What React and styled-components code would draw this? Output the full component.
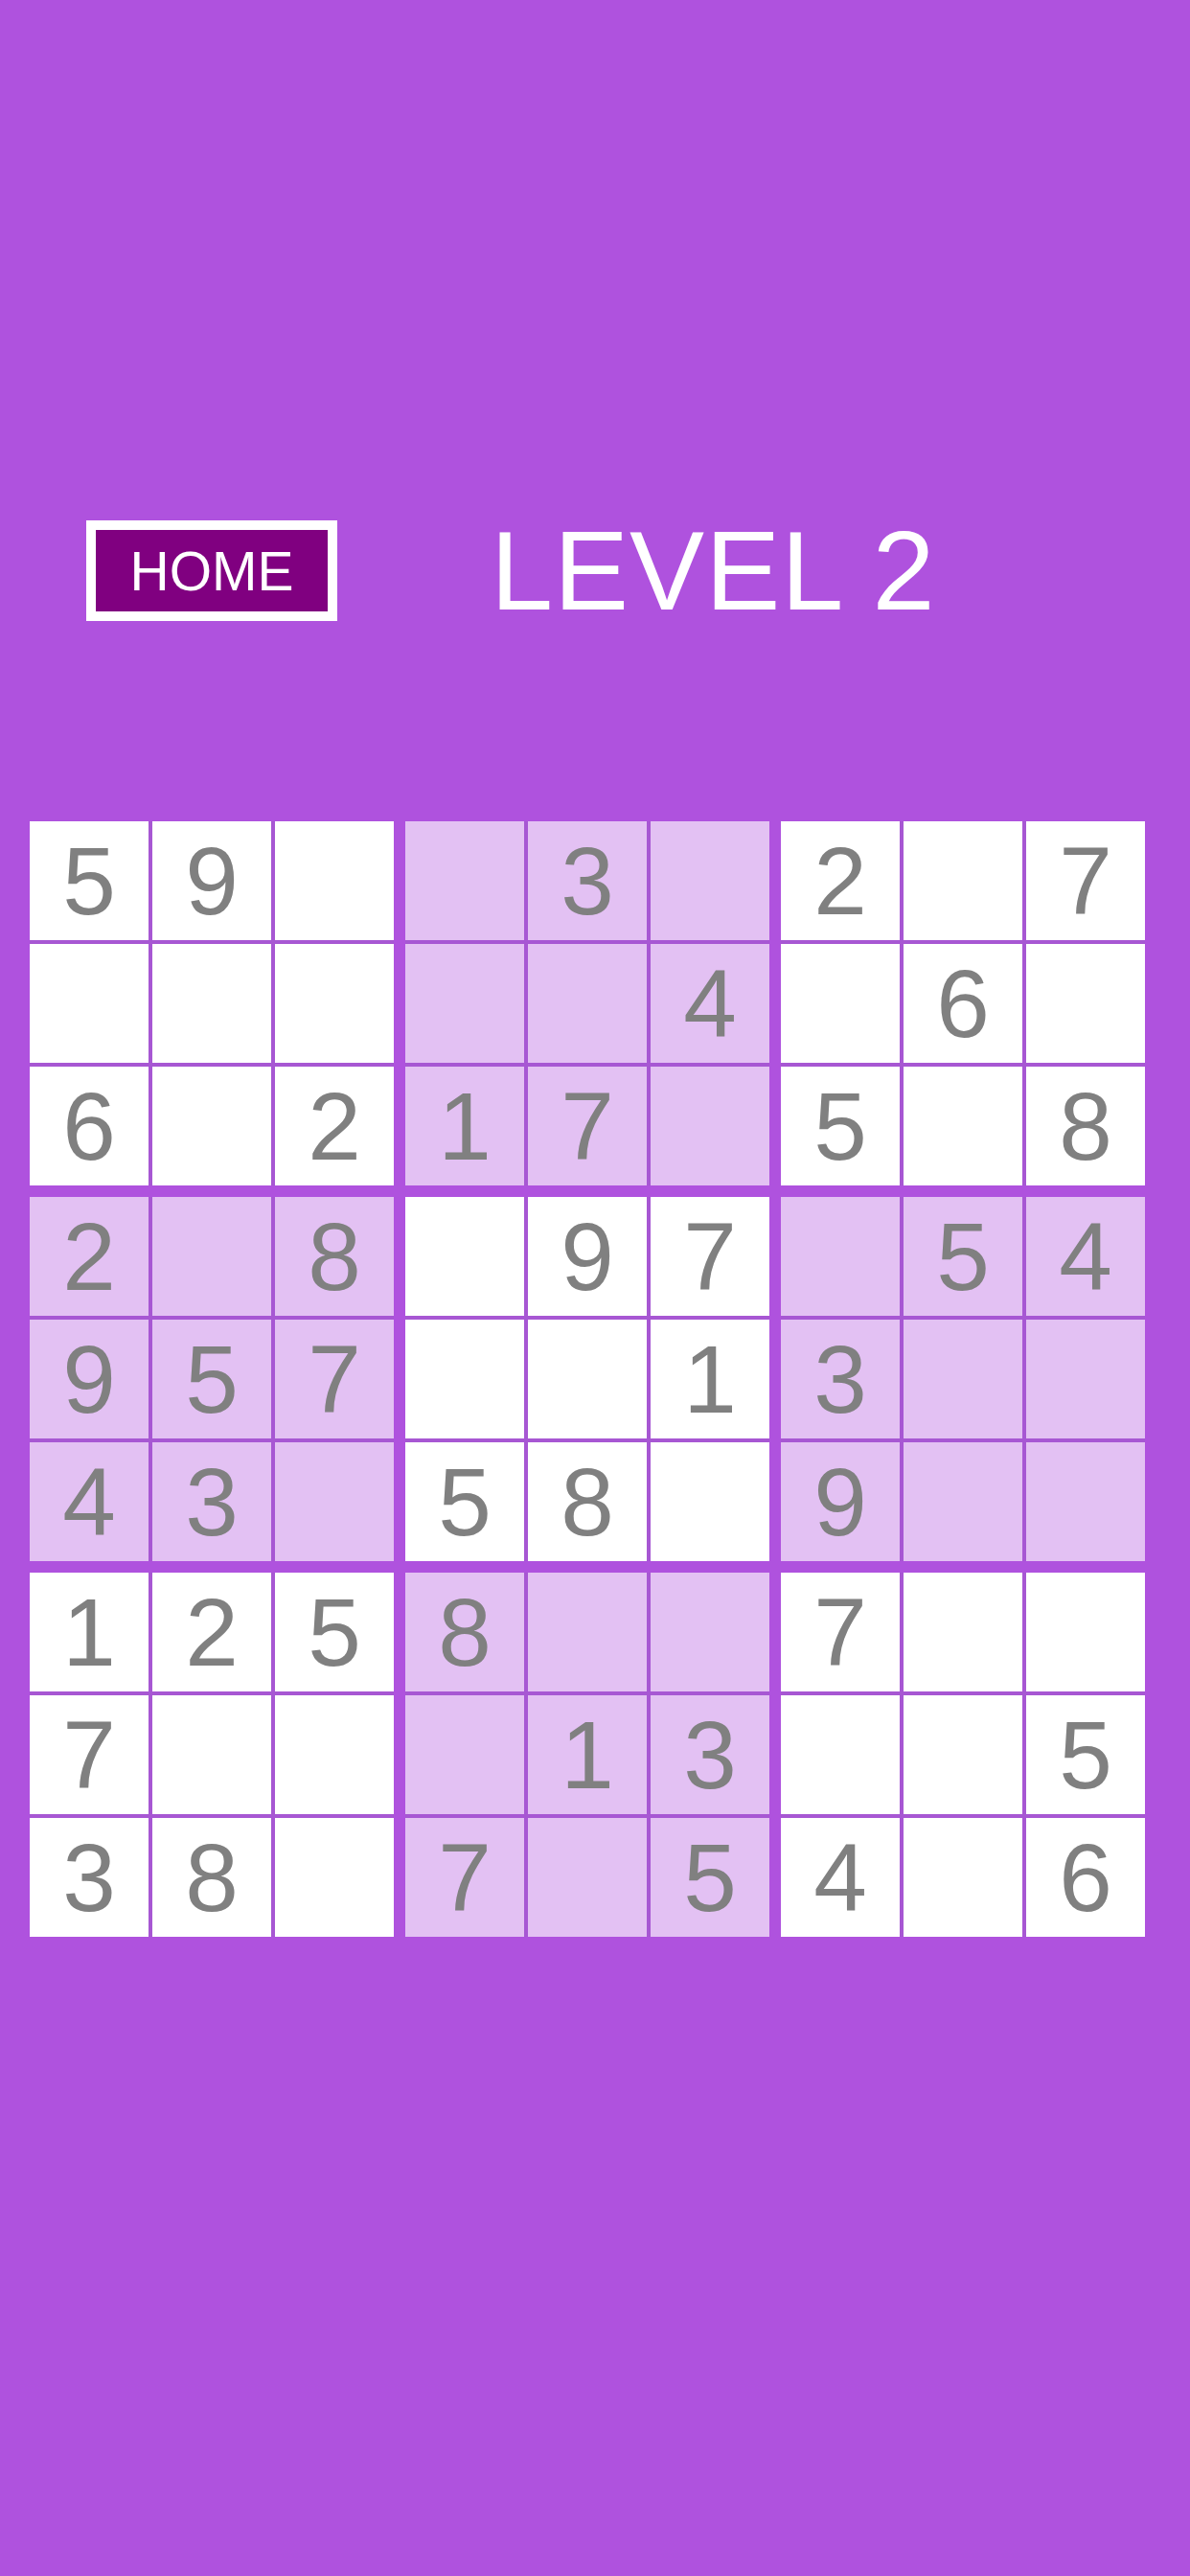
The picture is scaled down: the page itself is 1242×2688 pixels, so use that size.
import React from "react";
import styled, { createGlobalStyle } from "styled-components";

const GlobalStyle = createGlobalStyle`
  html, body {
    margin: 0;
    padding: 0;
    background-color: #af52de;
  }
  body {
    font-family: "Liberation Sans", Arial, Helvetica, sans-serif;
  }
`;

// rows of the board, 0 = empty
const board = [
  [5, 9, 0, 0, 3, 0, 2, 0, 7],
  [0, 0, 0, 0, 0, 4, 0, 6, 0],
  [6, 0, 2, 1, 7, 0, 5, 0, 8],
  [2, 0, 8, 0, 9, 7, 0, 5, 4],
  [9, 5, 7, 0, 0, 1, 3, 0, 0],
  [4, 3, 0, 5, 8, 0, 9, 0, 0],
  [1, 2, 5, 8, 0, 0, 7, 0, 0],
  [7, 0, 0, 0, 1, 3, 0, 0, 5],
  [3, 8, 0, 7, 0, 5, 4, 0, 6],
];

export const Background = styled.div`
  background-color: #af52de;
  width: 1242px;
  min-height: 2688px;
  display: flex;
  flex-direction: column;
  padding-top: 543px;
  box-sizing: border-box;
`;

export const Header = styled.div`
  display: flex;
  align-items: center;
  height: 105px;
  padding-left: 90px;
  gap: 160px;
`;

export const HomeButton = styled.button`
  width: 262px;
  height: 105px;
  box-sizing: border-box;
  border: 10px solid #fff;
  background-color: #800080;
  color: #fff;
  font-family: "Liberation Sans", Arial, sans-serif;
  font-size: 57px;
  padding: 0;
  display: flex;
  align-items: center;
  justify-content: center;
  cursor: pointer;
`;

export const Title = styled.h1`
  margin: 0;
  color: #fff;
  font-weight: 400;
  font-size: 117px;
  line-height: 105px;
  letter-spacing: 1px;
  white-space: nowrap;
`;

export const Board = styled.div`
  margin-top: 209px;
  margin-left: 31px;
  display: grid;
  grid-template-columns: repeat(3, 380px);
  grid-template-rows: repeat(3, 380px);
  gap: 12px;
  width: 1164px;
`;

export const Box = styled.div`
  display: grid;
  grid-template-columns: repeat(3, 124px);
  grid-template-rows: repeat(3, 124px);
  gap: 4px;
  background-color: #a757d3;
`;

export const Cell = styled.div`
  background-color: ${(p) => (p.$shaded ? "#e3c1f3" : "#ffffff")};
  color: #808080;
  font-size: 100px;
  line-height: 124px;
  text-align: center;
`;

const App = () => {
  const boxes = [];
  for (let b = 0; b < 9; b++) {
    const br = Math.floor(b / 3) * 3;
    const bc = (b % 3) * 3;
    const shaded = b % 2 === 1;
    const cells = [];
    for (let i = 0; i < 9; i++) {
      const v = board[br + Math.floor(i / 3)][bc + (i % 3)];
      cells.push(
        <Cell key={i} $shaded={shaded}>
          {v || ""}
        </Cell>
      );
    }
    boxes.push(<Box key={b}>{cells}</Box>);
  }

  return (
    <Background>
      <GlobalStyle />
      <Header>
        <HomeButton>HOME</HomeButton>
        <Title>LEVEL 2</Title>
      </Header>
      <Board>{boxes}</Board>
    </Background>
  );
};

export default App;
